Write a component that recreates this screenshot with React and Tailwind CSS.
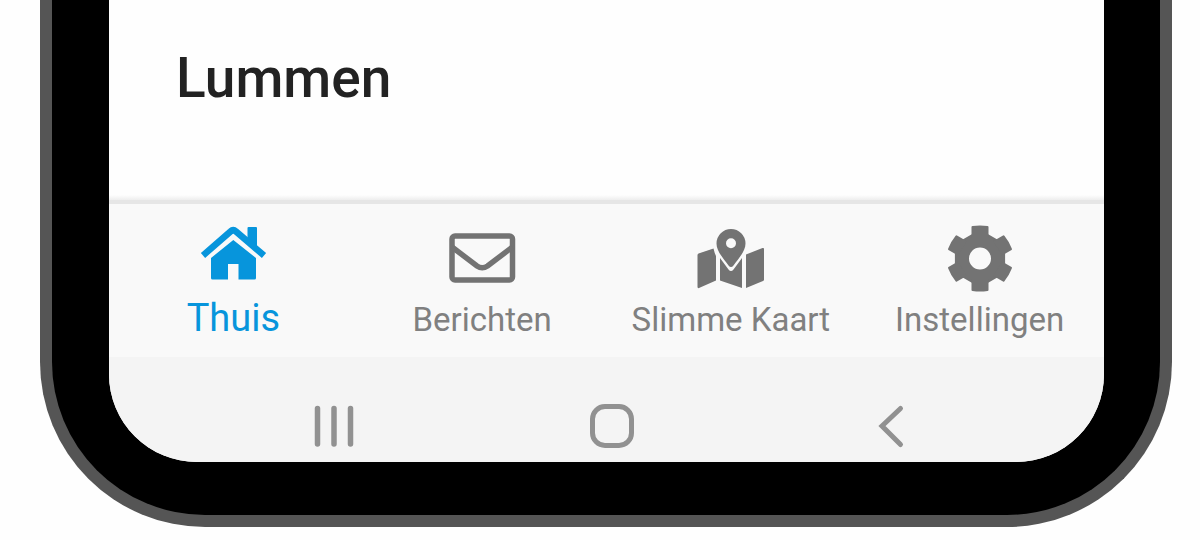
import { useState } from 'react'

const ICON = 'w-[68px] h-[68px]'
const SYS_ICON = 'w-12 h-12'

function HomeIcon() {
  return (
    <svg viewBox="0 0 68 68" className={ICON} fill="currentColor" aria-hidden="true">
      <path d="M48.500 4Q48.500 3 49.500 3H57Q58 3 58 4V28L48.500 19Z" />
      <path d="M4 31.500L31.500 7.500Q34.200 5 37 7.500L65 31.500" fill="none" stroke="currentColor" strokeWidth="6.500" />
      <path d="M34.300 16L57 34V54Q57 55.500 55.500 55.500H39.500V40H29V55.500H13.500Q12 55.500 12 54V34Z" />
    </svg>
  )
}

function MailIcon() {
  return (
    <svg viewBox="0 0 68 68" className={ICON} fill="none" stroke="currentColor" aria-hidden="true">
      <rect x="4" y="12" width="60.500" height="44" rx="3" strokeWidth="5.500" />
      <path d="M4 23L29 42Q34.200 45.500 39.500 42L64.500 23" strokeWidth="5.500" />
    </svg>
  )
}

function MapIcon() {
  return (
    <svg viewBox="0 0 68 68" className={ICON} fill="currentColor" aria-hidden="true">
      <path d="M0.500 31Q0.500 30 1.500 29.500L16.500 24.500Q17.500 29 19 32V56.500L2 64Q0.500 64.500 0.500 63Z" />
      <path d="M23 34L31.500 45.500Q34 48.500 36.500 45.500L45 34V64L23 56.500Z" />
      <path d="M49 30.500L65.500 24Q67 23.500 67 25V55.500Q67 56.500 66 57L49 64Z" />
      <path fillRule="evenodd" d="M34 5A14.500 14.500 0 0 0 19.500 19.500C19.500 27 26 34 31.500 41.500Q34 44.500 36.500 41.500C42 34 48.500 27 48.500 19.500A14.500 14.500 0 0 0 34 5ZM34 14.200A5 5 0 1 1 34 24.200A5 5 0 1 1 34 14.200Z" />
    </svg>
  )
}

function CogIcon() {
  return (
    <svg viewBox="0 0 68 68" className={ICON} fill="currentColor" aria-hidden="true">
      <path fillRule="evenodd" d="M34 5.500L59.100 20V49L34 63.500L8.900 49V20ZM34 23.500A11 11 0 1 0 34 45.500A11 11 0 1 0 34 23.500Z" />
      {[0, 60, 120, 180, 240, 300].map(a => (
        <path key={a} transform={`rotate(${a} 34 34.500)`} d="M25.500 14V3Q25.500 2.200 26.500 2Q34 0.800 41.500 2Q42.500 2.200 42.500 3V14Z" />
      ))}
    </svg>
  )
}

const tabs = [
  { id: 'thuis', label: 'Thuis', Icon: HomeIcon },
  { id: 'berichten', label: 'Berichten', Icon: MailIcon },
  { id: 'kaart', label: 'Slimme Kaart', Icon: MapIcon },
  { id: 'instellingen', label: 'Instellingen', Icon: CogIcon },
]

function TabBar({ active, onSelect }) {
  return (
    <nav className="grid grid-cols-4 bg-[#f9f9f9] pt-5 pb-[9px]">
      {tabs.map(({ id, label, Icon }) => (
        <button
          key={id}
          type="button"
          onClick={() => onSelect(id)}
          className={`flex flex-col items-center whitespace-nowrap ${id === active ? 'text-[#0795dc]' : 'text-[#737373]'}`}
        >
          <Icon />
          <span className={id === active ? 'text-[38px] leading-[52px]' : 'text-[33px] leading-[56px] text-[#808080]'}>{label}</span>
        </button>
      ))}
    </nav>
  )
}

// Android navigation: recents, home, back
function SystemBar() {
  return (
    <div className="grid grid-cols-3 justify-items-center bg-[#f4f4f4] text-[#919191] pt-[45px] pb-3 pl-[86px] pr-[74px]">
      <button type="button" aria-label="Recent">
        <svg viewBox="0 0 48 48" className={SYS_ICON} fill="none" stroke="currentColor" strokeWidth="5.500" strokeLinecap="round">
          <path d="M7.500 6.500V42M24 6.500V42M40.500 6.500V42" />
        </svg>
      </button>
      <button type="button" aria-label="Startscherm">
        <svg viewBox="0 0 48 48" className={SYS_ICON} fill="none" stroke="currentColor" strokeWidth="5">
          <rect x="4.500" y="4.500" width="39" height="39" rx="12.500" />
        </svg>
      </button>
      <button type="button" aria-label="Terug">
        <svg viewBox="0 0 48 48" className={SYS_ICON} fill="none" stroke="currentColor" strokeWidth="5" strokeLinecap="round">
          <path d="M33.500 6.500L15 24L33.500 42.500" />
        </svg>
      </button>
    </div>
  )
}

export default function App() {
  const [active, setActive] = useState('thuis')

  return (
    <div className="bg-[#fefefe] pl-10 pr-7 pb-[13px] font-['Roboto',sans-serif]">
      <div className="rounded-b-[165px] border-x-12 border-b-12 border-[#555555] bg-black pl-[57px] pr-14 pb-[53px]">
        <div className="rounded-b-[88px] overflow-hidden bg-[#fefefe]">
          <main className="pt-[46px] pb-[85px] pl-[67px]">
            <h1 className="text-[55px] leading-[64px] font-medium text-[#222222]">Lummen</h1>
          </main>
          <div className="h-[5px] bg-linear-to-b from-[#fefefe] to-[#eeeeee]" />
          <div className="h-1 bg-[#e6e6e6]" />
          <TabBar active={active} onSelect={setActive} />
          <SystemBar />
        </div>
      </div>
    </div>
  )
}
